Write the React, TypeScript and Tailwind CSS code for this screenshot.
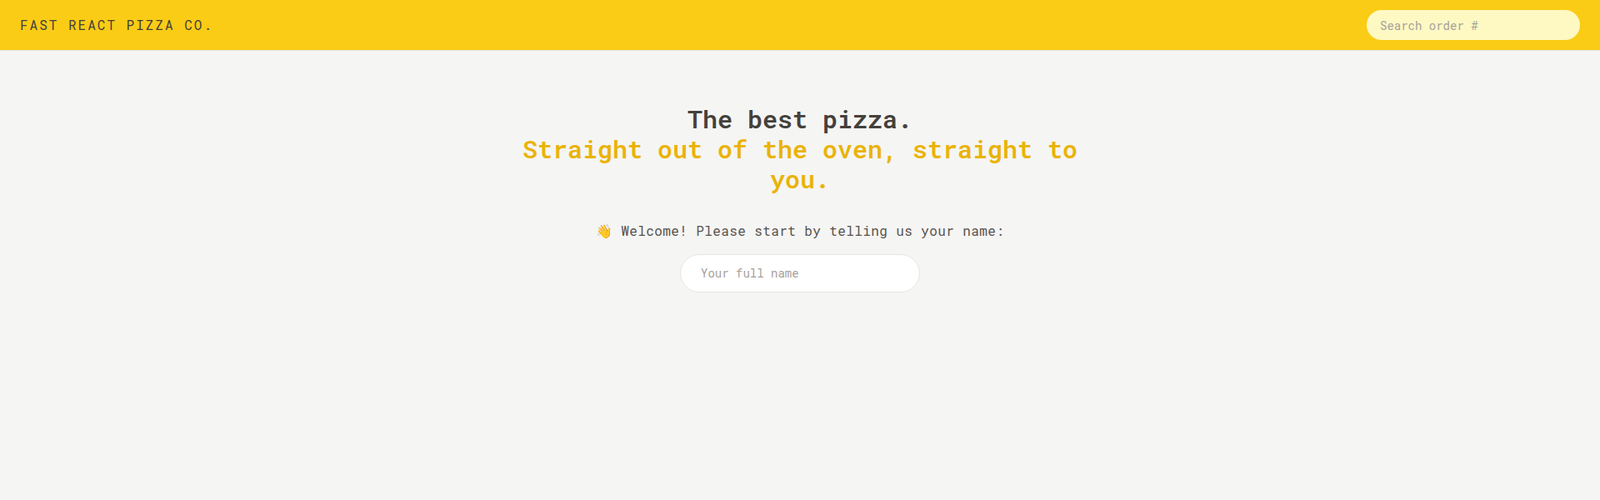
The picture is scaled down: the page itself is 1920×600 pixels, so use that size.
import { useState } from "react";

function Header() {
  return (
    <header className="flex items-center justify-between border-b border-stone-200 bg-[#facc15] px-6 py-3">
      <a href="#" className="text-base uppercase tracking-[0.125em] text-stone-700">
        Fast React Pizza Co.
      </a>
      <input
        placeholder="Search order #"
        className="h-9 w-64 rounded-full bg-[#fef9c3] px-4 text-sm text-stone-700 placeholder:text-stone-400 focus:outline-none"
      />
    </header>
  );
}

function CreateUser() {
  const [name, setName] = useState("");

  return (
    <form>
      <p className="mb-4 text-base tracking-wide text-stone-600">
        👋 Welcome! Please start by telling us your name:
      </p>
      <input
        type="text"
        placeholder="Your full name"
        value={name}
        onChange={(e) => setName(e.target.value)}
        className="w-72 rounded-full border border-stone-200 bg-white px-6 py-3 text-sm text-stone-700 placeholder:text-stone-400 focus:outline-none"
      />
    </form>
  );
}

export default function App() {
  return (
    <div
      className="min-h-screen bg-stone-100 text-stone-700"
      style={{ fontFamily: '"Roboto Mono", "DejaVu Sans Mono", monospace' }}
    >
      <Header />
      <main className="my-16 px-4 text-center">
        <h1 className="mx-auto mb-8 max-w-2xl text-3xl font-semibold text-stone-700">
          The best pizza.
          <br />
          <span className="text-[#eab308]">Straight out of the oven, straight to you.</span>
        </h1>
        <CreateUser />
      </main>
    </div>
  );
}
